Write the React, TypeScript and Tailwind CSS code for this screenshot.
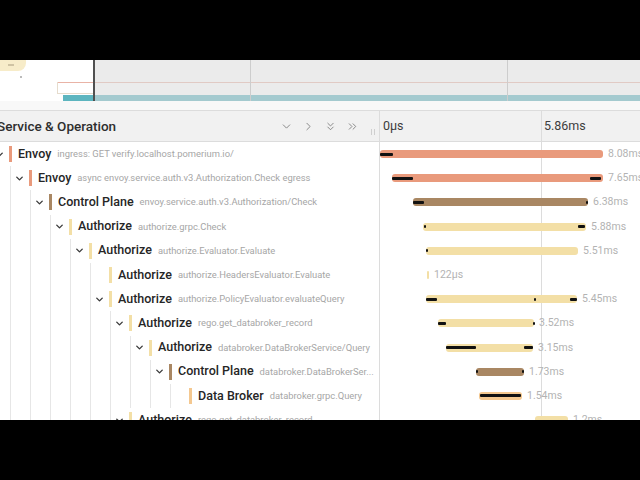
import React from 'react';
import { ChevronDown, ChevronRight, ChevronsDown, ChevronsRight } from 'lucide-react';

const ENVOY = '#e99a7c';
const CONTROL = '#a98763';
const AUTHZ = '#f3dfa6';
const BROKER = '#f4c890';

type Span = {
  d: number;
  svc: string;
  op: string;
  color: string;
  kids: boolean;
  start: number;
  end: number;
  label: string;
  marks: [number, number][];
};

// bar positions are page x, timeline starts at x=380
const SPANS: Span[] = [
  { d: 0, svc: 'Envoy', op: 'ingress: GET verify.localhost.pomerium.io/', color: ENVOY, kids: true, start: 380, end: 603, label: '8.08ms', marks: [[380, 393]] },
  { d: 1, svc: 'Envoy', op: 'async envoy.service.auth.v3.Authorization.Check egress', color: ENVOY, kids: true, start: 392, end: 603, label: '7.65ms', marks: [[392, 413], [590, 601]] },
  { d: 2, svc: 'Control Plane', op: 'envoy.service.auth.v3.Authorization/Check', color: CONTROL, kids: true, start: 413, end: 588, label: '6.38ms', marks: [[413, 424], [586, 588]] },
  { d: 3, svc: 'Authorize', op: 'authorize.grpc.Check', color: AUTHZ, kids: true, start: 423, end: 586, label: '5.88ms', marks: [[424, 426], [578, 585]] },
  { d: 4, svc: 'Authorize', op: 'authorize.Evaluator.Evaluate', color: AUTHZ, kids: true, start: 426, end: 578, label: '5.51ms', marks: [[426, 428]] },
  { d: 5, svc: 'Authorize', op: 'authorize.HeadersEvaluator.Evaluate', color: AUTHZ, kids: false, start: 427, end: 429, label: '122μs', marks: [] },
  { d: 5, svc: 'Authorize', op: 'authorize.PolicyEvaluator.evaluateQuery', color: AUTHZ, kids: true, start: 426, end: 577, label: '5.45ms', marks: [[426, 437], [534, 536], [570, 577]] },
  { d: 6, svc: 'Authorize', op: 'rego.get_databroker_record', color: AUTHZ, kids: true, start: 438, end: 534, label: '3.52ms', marks: [[438, 446], [533, 535]] },
  { d: 7, svc: 'Authorize', op: 'databroker.DataBrokerService/Query', color: AUTHZ, kids: true, start: 446, end: 533, label: '3.15ms', marks: [[446, 476], [524, 533]] },
  { d: 8, svc: 'Control Plane', op: 'databroker.DataBrokerSer...', color: CONTROL, kids: true, start: 476, end: 524, label: '1.73ms', marks: [[476, 478], [522, 524]] },
  { d: 9, svc: 'Data Broker', op: 'databroker.grpc.Query', color: BROKER, kids: false, start: 479, end: 522, label: '1.54ms', marks: [[480, 521]] },
  { d: 6, svc: 'Authorize', op: 'rego.get_databroker_record', color: AUTHZ, kids: true, start: 535, end: 568, label: '1.2ms', marks: [] },
];

const Minimap: React.FC = () => (
  <div className="relative h-[41px] bg-white overflow-hidden shrink-0">
    <div className="absolute left-0 top-0 w-[26px] h-[11px] rounded-br-[8px] bg-[#f7ecc9]" />
    <div className="absolute left-[8px] top-[4px] w-[6px] h-[2px] bg-[#cfc3a3]" />
    <div className="absolute left-[20px] top-[16px] w-[2px] h-[2px] bg-[#bbb]" />
    <div className="absolute left-[57px] top-[22px] right-0 h-px bg-[#e9b3a6]" />
    <div className="absolute left-[57px] top-[22px] w-[37px] h-[12px] border-l border-b border-[#e6dccd]" />
    <div className="absolute left-[63px] top-[35px] right-0 h-[6px] bg-[#5db5bf]" />
    <div className="absolute left-[94px] top-0 right-0 bottom-0 bg-[rgba(219,219,219,0.56)]" />
    <div className="absolute left-[250px] top-0 bottom-0 w-px bg-[#cdcdcd]" />
    <div className="absolute left-[507px] top-0 bottom-0 w-px bg-[#cdcdcd]" />
    <div className="absolute left-[93px] top-0 bottom-0 w-[2px] bg-[#505050]" />
  </div>
);

const Header: React.FC = () => (
  <div className="flex h-[32px] shrink-0 bg-[#f1f1f1] border-y border-[#dcdcdc]">
    <div className="w-[380px] flex items-center border-r border-[#dcdcdc] relative">
      <span className="-ml-[3px] text-[13.5px] font-medium text-[#2e2e2e]">Service &amp; Operation</span>
      <div className="ml-auto mr-[20px] flex items-center gap-[9px] text-[#7a7a7a]">
        <ChevronDown size={13} strokeWidth={1.6} />
        <ChevronRight size={13} strokeWidth={1.6} />
        <ChevronsDown size={13} strokeWidth={1.6} />
        <ChevronsRight size={13} strokeWidth={1.6} />
      </div>
      <div className="absolute right-[4px] top-[18px] flex gap-[2px]">
        <div className="w-px h-[6px] bg-[#cfcfcf]" />
        <div className="w-px h-[6px] bg-[#cfcfcf]" />
      </div>
    </div>
    <div className="flex-1 flex items-center relative">
      <span className="ml-[3px] text-[12.5px] text-[#3d3d3d]">0μs</span>
      <div className="absolute left-[161px] top-0 bottom-0 w-px bg-[#dcdcdc]" />
      <span className="absolute left-[164px] text-[12.5px] text-[#3d3d3d]">5.86ms</span>
    </div>
  </div>
);

const Row: React.FC<{ span: Span }> = ({ span }) => (
  <div className="flex h-[24.2px] shrink-0 bg-white">
    <div className="w-[380px] shrink-0 border-r border-[#dcdcdc] overflow-hidden">
      <div className="-ml-[9px] flex items-center h-full whitespace-nowrap">
        {Array.from({ length: span.d }).map((_, k) => (
          <div key={k} className="w-[20px] h-full shrink-0 border-r border-[#e6e6e6]" />
        ))}
        <div className="w-[16px] shrink-0 flex justify-center text-[#3a3a3a]">
          {span.kids && <ChevronDown size={11} strokeWidth={3} />}
        </div>
        <div className="ml-[2px] w-[3px] h-[16px] shrink-0" style={{ backgroundColor: span.color }} />
        <span className="ml-[6px] text-[12.5px] font-medium text-[#262626]">{span.svc}</span>
        <span className="ml-[6px] text-[9.4px] text-[#a6a6a6]">{span.op}</span>
      </div>
    </div>
    <div className="flex-1 relative">
      <div className="absolute left-[161px] top-0 bottom-0 w-px bg-[#dcdcdc]" />
      <div
        className="absolute top-[8px] h-[8px] rounded-[3px]"
        style={{ left: span.start - 380, width: span.end - span.start, backgroundColor: span.color }}
      />
      {span.marks.map(([a, b], i) => (
        <div
          key={i}
          className="absolute top-[10.5px] h-[3px] bg-[#111] rounded-[1px]"
          style={{ left: a - 380, width: b - a }}
        />
      ))}
      <span
        className="absolute top-[5px] text-[10.5px] leading-[14px] text-[#b3b3b3]"
        style={{ left: span.end - 380 + 5 }}
      >
        {span.label}
      </span>
    </div>
  </div>
);

const App: React.FC = () => (
  <div className="w-[640px] h-[480px] bg-black flex flex-col overflow-hidden font-['Roboto',sans-serif]">
    <div className="h-[60px] shrink-0" />
    <div className="h-[360px] shrink-0 bg-white flex flex-col overflow-hidden">
      <Minimap />
      <div className="h-[9px] shrink-0 bg-[#f8f8f8]" />
      <Header />
      {SPANS.map((s, i) => (
        <Row key={i} span={s} />
      ))}
    </div>
    <div className="h-[60px] shrink-0" />
  </div>
);

export default App;
